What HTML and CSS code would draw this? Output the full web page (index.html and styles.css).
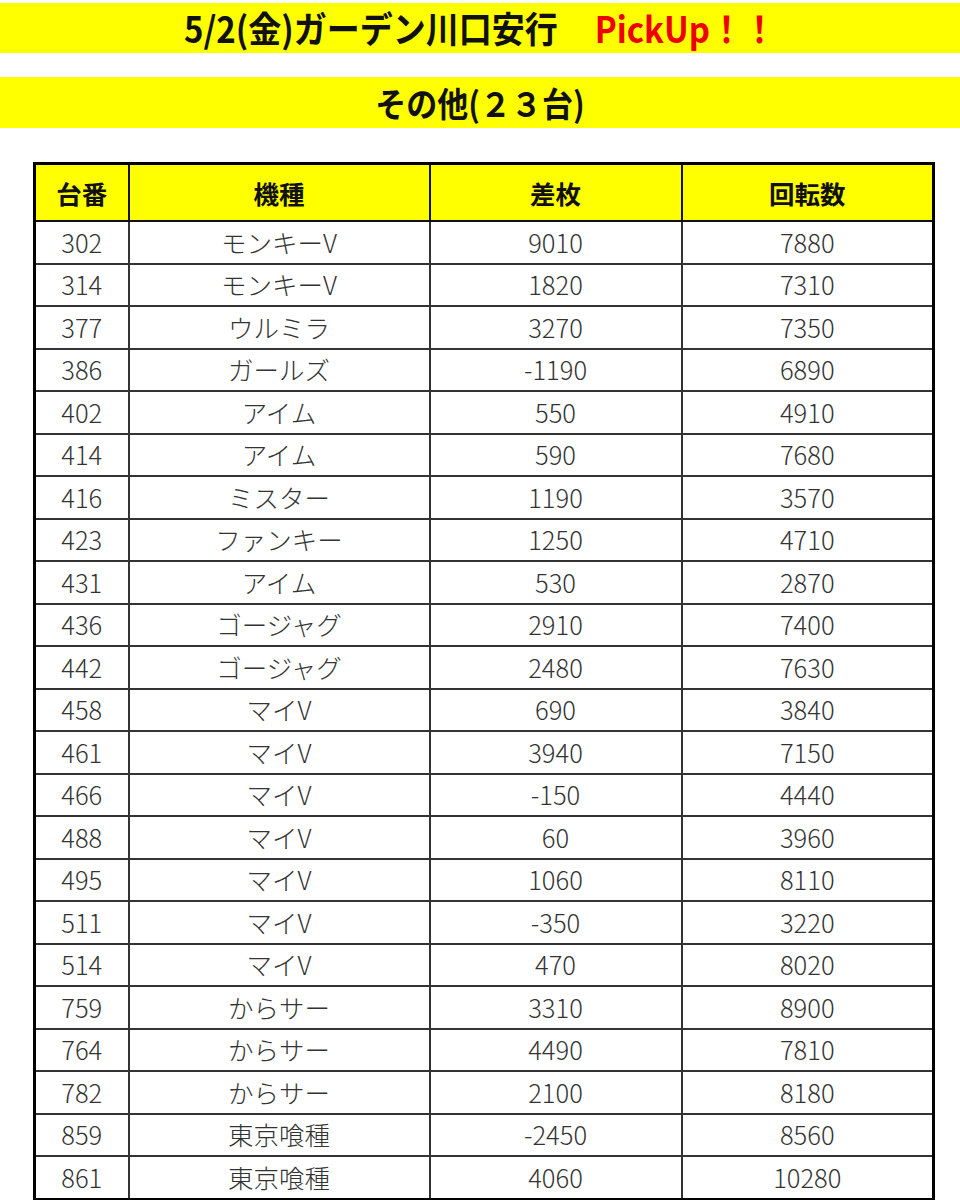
FILE: index.html
```html
<!DOCTYPE html>
<html lang="ja">
<head>
<meta charset="utf-8">
<link rel="stylesheet" href="styles.css">
</head>
<body>
<div class="banner banner-title">
  <span class="title-main">5/2(金)ガーデン川口安行</span><span class="title-pick">PickUp！！</span>
</div>
<div class="banner banner-sub">
  <span class="sub-text">その他(２３台)</span>
</div>
<div class="table-wrap">
<table class="data">
  <colgroup>
    <col class="c1"><col class="c2"><col class="c3"><col class="c4">
  </colgroup>
  <thead>
    <tr><th>台番</th><th>機種</th><th>差枚</th><th>回転数</th></tr>
  </thead>
  <tbody>
    <tr><td>302</td><td>モンキーV</td><td>9010</td><td>7880</td></tr>
    <tr><td>314</td><td>モンキーV</td><td>1820</td><td>7310</td></tr>
    <tr><td>377</td><td>ウルミラ</td><td>3270</td><td>7350</td></tr>
    <tr><td>386</td><td>ガールズ</td><td>-1190</td><td>6890</td></tr>
    <tr><td>402</td><td>アイム</td><td>550</td><td>4910</td></tr>
    <tr><td>414</td><td>アイム</td><td>590</td><td>7680</td></tr>
    <tr><td>416</td><td>ミスター</td><td>1190</td><td>3570</td></tr>
    <tr><td>423</td><td>ファンキー</td><td>1250</td><td>4710</td></tr>
    <tr><td>431</td><td>アイム</td><td>530</td><td>2870</td></tr>
    <tr><td>436</td><td>ゴージャグ</td><td>2910</td><td>7400</td></tr>
    <tr><td>442</td><td>ゴージャグ</td><td>2480</td><td>7630</td></tr>
    <tr><td>458</td><td>マイV</td><td>690</td><td>3840</td></tr>
    <tr><td>461</td><td>マイV</td><td>3940</td><td>7150</td></tr>
    <tr><td>466</td><td>マイV</td><td>-150</td><td>4440</td></tr>
    <tr><td>488</td><td>マイV</td><td>60</td><td>3960</td></tr>
    <tr><td>495</td><td>マイV</td><td>1060</td><td>8110</td></tr>
    <tr><td>511</td><td>マイV</td><td>-350</td><td>3220</td></tr>
    <tr><td>514</td><td>マイV</td><td>470</td><td>8020</td></tr>
    <tr><td>759</td><td>からサー</td><td>3310</td><td>8900</td></tr>
    <tr><td>764</td><td>からサー</td><td>4490</td><td>7810</td></tr>
    <tr><td>782</td><td>からサー</td><td>2100</td><td>8180</td></tr>
    <tr><td>859</td><td>東京喰種</td><td>-2450</td><td>8560</td></tr>
    <tr><td>861</td><td>東京喰種</td><td>4060</td><td>10280</td></tr>
  </tbody>
</table>
</div>
</body>
</html>
```
FILE: styles.css
```css
html, body {
  margin: 0;
  padding: 0;
  background: #ffffff;
}
body {
  font-family: "Noto Sans CJK JP", "Noto Sans", sans-serif;
  color: #222;
}
.banner {
  background: #ffff00;
  display: flex;
  align-items: center;
  justify-content: center;
  font-weight: 700;
  color: #111;
}
.banner-title {
  margin-top: 3px;
  height: 50px;
  font-size: 33px;
}
.title-main {
  display: inline-block;
  transform: scaleY(1.1);
}
.title-pick {
  display: inline-block;
  margin-left: 37px;
  color: #ee0000;
  transform: scaleY(1.1);
}
.banner-sub {
  margin-top: 24px;
  height: 51px;
  font-size: 31px;
}
.sub-text {
  display: inline-block;
  transform: scaleY(1.1);
}
.table-wrap {
  padding: 34px 28px 0 33px;
}
.data {
  width: 899px;
  border-collapse: collapse;
  border: 3px solid #000;
  table-layout: fixed;
}
.c1 { width: 94px; }
.c2 { width: 301px; }
.c3 { width: 252px; }
.c4 { width: 252px; }
.data th {
  background: #ffff00;
  height: 55px;
  font-size: 25.5px;
  font-weight: 700;
  color: #111;
  border: 2px solid #111;
  padding: 0;
}
.data td {
  height: 38.5px;
  font-size: 25.5px;
  font-weight: 300;
  color: #333;
  text-align: center;
  border: 2px solid #333;
  padding: 0 0 2px;
  line-height: 1;
}
```
